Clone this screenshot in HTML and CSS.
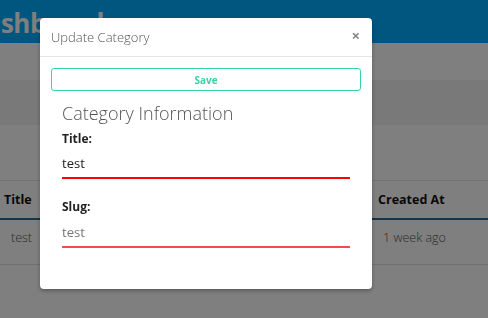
FILE: index.html
```html
<!doctype html>
<html lang="en">
<head>
  <meta charset="UTF-8">
  <title>Categories</title>
  <link rel="stylesheet" href="styles.css">
</head>
<body>

<div id="page">
  <div class="topbar">
    <h1>Dashboard</h1>
  </div>
  <div class="subbar"></div>
  <div class="toolbar"></div>
  <div class="spacer"></div>

  <div class="table">
    <div class="row head">
      <span class="c-title">Title</span>
      <span class="c-slug">Slug</span>
      <span class="c-created">Created At</span>
    </div>
    <div class="row">
      <span class="c-title cell">test</span>
      <span class="c-slug cell">test</span>
      <span class="c-created cell">1 week ago</span>
    </div>
  </div>
</div>

<div class="backdrop"></div>

<div class="modal">
  <div class="modal-head">
    <span class="modal-title">Update Category</span>
    <span class="close">&times;</span>
  </div>
  <div class="modal-body">
    <button class="save">Save</button>
    <form class="info">
      <h3>Category Information</h3>
      <label for="title">Title:</label>
      <input type="text" id="title" class="field" value="test">
      <label for="slug">Slug:</label>
      <input type="text" id="slug" class="field soft" value="test">
    </form>
  </div>
</div>

</body>
</html>
```

FILE: styles.css
```css
body {
  margin: 0;
  font-family: 'Open Sans', 'Noto Sans', sans-serif;
  background: #fff;
  color: #333;
  overflow: hidden;
}

.topbar {
  height: 43px;
  background: #02adfe;
  overflow: hidden;
}

.topbar h1 {
  margin: 0;
  color: #fff;
  font-size: 26px;
  font-weight: 700;
  line-height: 46px;
  letter-spacing: -0.5px;
  text-indent: -33px;
  white-space: nowrap;
}

.subbar {
  height: 37px;
  background: #fff;
}

.toolbar {
  height: 45px;
  background: #f2f2f2;
}

.spacer {
  height: 55px;
}

.table {
  border-top: 1px solid #e6e6e6;
}

.row {
  display: grid;
  grid-template-columns: 1fr 1fr 110px;
  align-items: start;
  box-sizing: border-box;
  height: 45px;
  padding-top: 10px;
  border-bottom: 1px solid #dedede;
  font-size: 12px;
  line-height: 16px;
}

.row.head {
  height: 39px;
  padding-top: 11px;
  border-bottom: 2px solid #2a6a94;
  font-weight: 700;
  color: #111;
  font-size: 12.5px;
}

.row span {
  padding-left: 4px;
}

.row .cell {
  padding-left: 11px;
  font-weight: 300;
  font-size: 12.5px;
  color: #555;
}

.row .c-created {
  padding-left: 0;
}

.row .c-created.cell {
  padding-left: 5px;
}

.backdrop {
  position: fixed;
  top: 0;
  left: 0;
  right: 0;
  bottom: 0;
  background: rgba(0,0,0,0.5);
}

.modal {
  position: fixed;
  top: 18px;
  left: 40px;
  width: 332px;
  background: #fff;
  border-radius: 4px;
  box-shadow: 0 2px 4px rgba(0,0,0,0.3);
}

.modal-head {
  display: flex;
  justify-content: space-between;
  align-items: center;
  height: 38px;
  padding: 0 12px 0 11px;
  border-bottom: 1px solid #e5e5e5;
}

.modal-title {
  font-size: 13px;
  font-weight: 300;
  color: #555;
}

.close {
  font-size: 15px;
  font-weight: 700;
  color: #888;
  margin-top: -5px;
}

.modal-body {
  padding: 11px 11px 41px;
}

.save {
  display: block;
  width: 100%;
  height: 23px;
  background: #fff;
  border: 1px solid #3ad2ab;
  border-radius: 3px;
  color: #3ad2ab;
  font-family: inherit;
  font-size: 10px;
  font-weight: 700;
}

.info {
  padding: 0 11px;
}

.info h3 {
  margin: 11px 0 0;
  font-size: 18px;
  font-weight: 300;
  line-height: 22px;
  color: #555;
}

.info label {
  display: block;
  margin-top: 7px;
  font-size: 12px;
  font-weight: 700;
  line-height: 16px;
  color: #222;
}

.info label[for=slug] {
  margin-top: 20px;
}

.field {
  display: block;
  box-sizing: border-box;
  width: 100%;
  height: 30px;
  margin-top: 2px;
  padding: 0;
  border: 0;
  border-bottom: 2px solid #ff0000;
  font-family: inherit;
  font-size: 13px;
  color: #222;
  outline: none;
}

.field.soft {
  margin-top: 3px;
  color: #777;
  border-bottom-color: #f44c4c;
}
```
